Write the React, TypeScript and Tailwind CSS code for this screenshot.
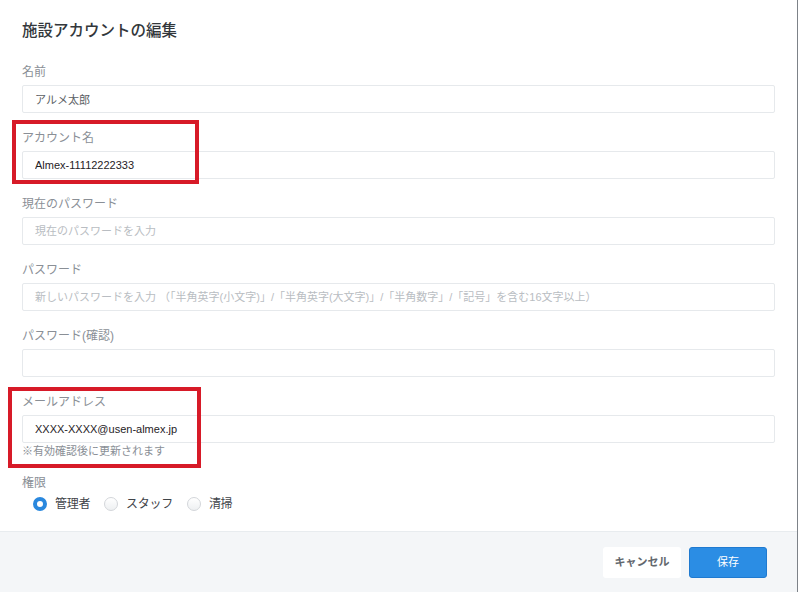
import React from "react";

const jp = '"Liberation Sans", "Noto Sans CJK JP", sans-serif';

function Field({
  label,
  value,
  placeholder,
  dim,
  hint,
}: {
  label: string;
  value?: string;
  placeholder?: string;
  dim?: boolean;
  hint?: string;
}) {
  return (
    <div className="flex flex-col">
      <label className="h-[18px] text-[12px] leading-[18px] text-[#8a8f96]">{label}</label>
      <input
        readOnly
        defaultValue={value}
        placeholder={placeholder}
        className={
          "mt-[4px] h-[28px] w-full rounded-[2px] border border-[#e6e9ec] bg-white px-[12px] text-[11px] outline-none placeholder:text-[#b9bdc2] " +
          (dim ? "text-[#5a5e63]" : "text-[#1f2226]")
        }
        style={{ fontFamily: jp }}
      />
      {hint && <p className="h-[16px] text-[11px] leading-[16px] text-[#8a8f96]">{hint}</p>}
    </div>
  );
}

function Radio({ label, checked }: { label: string; checked?: boolean }) {
  return (
    <label className="mr-[14px] flex items-center gap-[8px]">
      {checked ? (
        <span className="box-border size-[14px] rounded-full border-[4px] border-[#2a88de] bg-white" />
      ) : (
        <span className="box-border size-[14px] rounded-full border border-[#d3d6da] bg-gradient-to-b from-white to-[#eef0f2]" />
      )}
      <span className="text-[12px] tracking-[-0.3px] text-[#3f4449]">{label}</span>
    </label>
  );
}

export default function App() {
  return (
    <div className="relative h-[592px] w-[800px] overflow-hidden bg-white" style={{ fontFamily: jp }}>
      <div className="box-border flex h-full w-[798px] flex-col border-r border-[#7d8288]">
        <div className="flex-1 pl-[22px] pr-[22px] pt-[19px]">
          <h1 className="h-[24px] text-[15.5px] leading-[24px] font-medium text-[#33373b]">施設アカウントの編集</h1>
          <div className="mt-[20px] flex flex-col gap-[16px]">
            <Field label="名前" value="アルメ太郎" dim />
            <Field label="アカウント名" value="Almex-11112222333" />
            <Field label="現在のパスワード" placeholder="現在のパスワードを入力" />
            <Field
              label="パスワード"
              placeholder="新しいパスワードを入力 （「半角英字(小文字)」/「半角英字(大文字)」/「半角数字」/「記号」を含む16文字以上）"
            />
            <Field label="パスワード(確認)" />
            <Field label="メールアドレス" value="XXXX-XXXX@usen-almex.jp" hint="※有効確認後に更新されます" />
          </div>
          <div className="mt-[15px]">
            <div className="h-[18px] text-[12px] leading-[18px] text-[#8a8f96]">権限</div>
            <div className="mt-[2px] flex h-[20px] items-center pl-[11px]">
              <Radio label="管理者" checked />
              <Radio label="スタッフ" />
              <Radio label="清掃" />
            </div>
          </div>
        </div>
        <div className="flex h-[61px] items-center justify-end gap-[8px] border-t border-[#e8ecef] bg-[#f4f6f8] pr-[30px]">
          <button className="h-[31px] w-[78px] rounded-[3px] bg-white text-[11px] font-bold text-[#62676d]">キャンセル</button>
          <button className="h-[31px] w-[78px] rounded-[3px] border border-[#1f7ad0] bg-[#2b8de4] text-[11px] text-white">保存</button>
        </div>
      </div>

      <div className="pointer-events-none absolute left-[12px] top-[120px] h-[64px] w-[187px] border-[4px] border-[#d71a28]" />
      <div className="pointer-events-none absolute left-[8px] top-[387px] h-[81px] w-[193px] border-[4px] border-[#d71a28]" />
    </div>
  );
}
